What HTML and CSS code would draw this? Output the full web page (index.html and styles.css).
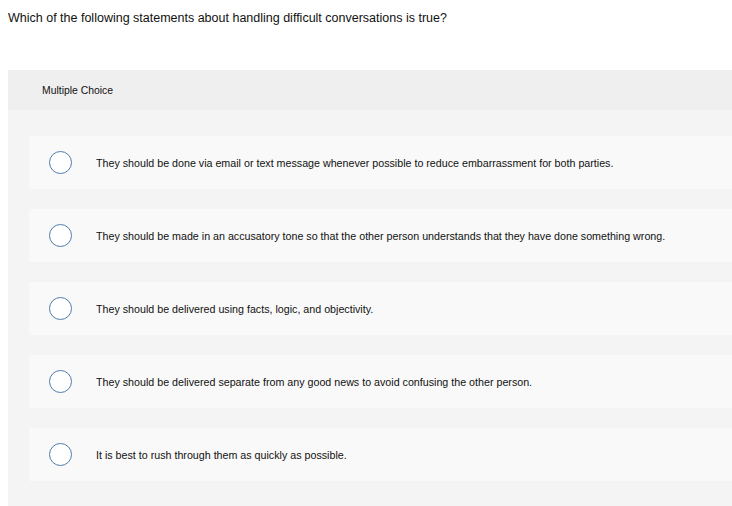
FILE: index.html
```html
<!DOCTYPE html>
<html>
<head>
<meta charset="utf-8">
<link rel="stylesheet" href="styles.css">
</head>
<body>
<div class="question">Which of the following statements about handling difficult conversations is true?</div>
<div class="panel">
  <div class="panel-head">Multiple Choice</div>
  <div class="panel-body">
    <div class="option"><span class="radio"></span><span class="label">They should be done via email or text message whenever possible to reduce embarrassment for both parties.</span></div>
    <div class="option"><span class="radio"></span><span class="label">They should be made in an accusatory tone so that the other person understands that they have done something wrong.</span></div>
    <div class="option"><span class="radio"></span><span class="label">They should be delivered using facts, logic, and objectivity.</span></div>
    <div class="option"><span class="radio"></span><span class="label">They should be delivered separate from any good news to avoid confusing the other person.</span></div>
    <div class="option"><span class="radio"></span><span class="label">It is best to rush through them as quickly as possible.</span></div>
  </div>
</div>
</body>
</html>
```
FILE: styles.css
```css
html, body {
  margin: 0;
  padding: 0;
  background: #ffffff;
  font-family: "Liberation Sans", Arial, sans-serif;
  color: #111;
}
.question {
  padding: 10px 0 0 8px;
  height: 70px;
  box-sizing: border-box;
  font-size: 12.5px;
  line-height: 16px;
}
.panel {
  margin-left: 8px;
}
.panel-head {
  background: #efefef;
  height: 40px;
  box-sizing: border-box;
  padding-left: 34px;
  display: flex;
  align-items: center;
  font-size: 10.4px;
}
.panel-body {
  background: #f4f4f4;
  padding: 26px 0 25px 21px;
  display: flex;
  flex-direction: column;
  gap: 20px;
}
.option {
  background: #f9f9f9;
  height: 53px;
  display: flex;
  align-items: center;
  padding-left: 20px;
  border-radius: 2px 0 0 2px;
}
.radio {
  width: 23px;
  height: 23px;
  box-sizing: border-box;
  border: 1.5px solid #4f7cac;
  border-radius: 50%;
  background: #fff;
  flex: none;
}
.label {
  margin-left: 24px;
  font-size: 10.7px;
}
```
